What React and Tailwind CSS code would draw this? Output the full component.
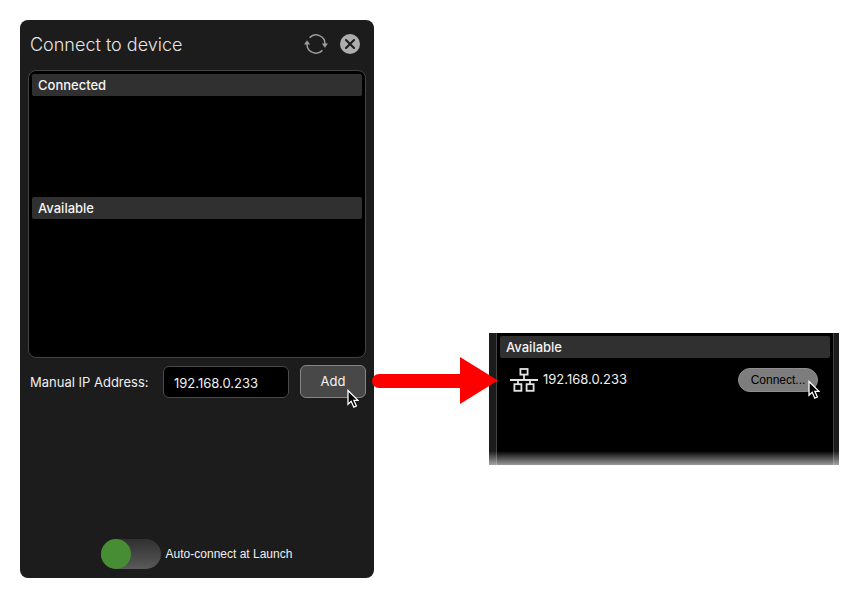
import React from "react";

function Cursor({ className }) {
  return (
    <svg className={`pointer-events-none absolute h-5 w-3 ${className}`} viewBox="0 0 12 20" aria-hidden="true">
      <path
        d="M1 1.5V15.2L4.2 12.3L6.8 18.2L9.4 17L6.9 11.4H11Z"
        fill="#000"
        stroke="#fff"
        strokeWidth="1.3"
        strokeLinejoin="miter"
      />
    </svg>
  );
}

function RefreshIcon() {
  return (
    <svg className="h-6 w-6" viewBox="0 0 24 24" fill="none" aria-hidden="true">
      <path d="M5.6 5.6A9 9 0 0 1 21 12" stroke="#9c9c9c" strokeWidth="1.5" />
      <path d="M18.4 18.4A9 9 0 0 1 3 12" stroke="#9c9c9c" strokeWidth="1.5" />
      <path d="M17.8 11.4H24L20.9 15.8Z" fill="#9c9c9c" />
      <path d="M0 12.6H6.2L3.1 8.2Z" fill="#9c9c9c" />
    </svg>
  );
}

function CloseIcon() {
  return (
    <svg className="h-5 w-5" viewBox="0 0 20 20" aria-hidden="true">
      <circle cx="10" cy="10" r="10" fill="#adadad" />
      <path d="M6 6L14 14M14 6L6 14" stroke="#1c1c1c" strokeWidth="2.1" strokeLinecap="round" />
    </svg>
  );
}

function NetworkIcon() {
  return (
    <svg className="h-6 w-7" viewBox="0 0 28 24" fill="none" stroke="#e4e4e4" strokeWidth="1.8" aria-hidden="true">
      <rect x="10.4" y="1" width="7.2" height="5.6" />
      <path d="M14 7V12M0 12H28M8 12V16M20 12V16" />
      <rect x="4.4" y="16.2" width="7" height="6.6" />
      <rect x="16.6" y="16.2" width="7" height="6.6" />
    </svg>
  );
}

function SectionTitle({ children }) {
  return (
    <h2 className="h-[22px] rounded-xs bg-[#303030] pl-1.5 text-[13px] leading-[23px] font-medium text-[#f4f4f4]">{children}</h2>
  );
}

function ConnectPanel() {
  return (
    <section className="flex w-[354px] shrink-0 flex-col rounded-[8px] bg-[#1c1c1c] px-2 pb-[9px] text-[#efefef]">
      <header className="flex h-[50px] items-center pr-1.5 pb-0.5 pl-0.5">
        <h1 className="flex-1 text-[18px] font-light text-[#e6e6e6]">Connect to device</h1>
        <div className="flex items-center gap-3">
          <button type="button" aria-label="Refresh">
            <RefreshIcon />
          </button>
          <button type="button" aria-label="Close">
            <CloseIcon />
          </button>
        </div>
      </header>
      <div className="rounded-[8px] border border-[#444] bg-black p-[3px]">
        <SectionTitle>Connected</SectionTitle>
        <div className="h-[101px]" />
        <SectionTitle>Available</SectionTitle>
        <div className="h-[135px]" />
      </div>
      <form className="flex items-center pt-[7px] pl-0.5 text-[13px]" onSubmit={(e) => e.preventDefault()}>
        <label htmlFor="ip" className="flex-1 pt-0.5">
          Manual IP Address:
        </label>
        <input
          id="ip"
          defaultValue="192.168.0.233"
          className="mr-[11px] h-8 w-[126px] rounded-[6px] border border-[#4a4a4a] bg-black px-2.5 pt-0.5 text-[#efefef]"
        />
        <div className="relative">
          <button type="submit" className="block h-[33px] w-[66px] rounded-[6px] border border-[#858585] bg-[#484848] text-[#f4f4f4]">
            Add
          </button>
          <Cursor className="top-6 left-[47px]" />
        </div>
      </form>
      <label className="mt-[141px] flex items-center justify-center gap-[5px] pr-px font-['Liberation_Sans',sans-serif] text-[12px]">
        <span className="relative flex h-[30px] w-[60px] rounded-full bg-linear-to-b from-[#303030] to-[#5a5a5a]">
          <input type="checkbox" className="peer absolute inset-0 h-full w-full cursor-pointer appearance-none" />
          <span className="pointer-events-none h-[30px] w-[30px] rounded-full bg-[#478d33] peer-checked:ml-auto" />
        </span>
        <span>Auto-connect at Launch</span>
      </label>
    </section>
  );
}

function AvailablePanel() {
  return (
    <section className="relative mt-[313px] h-[132px] w-[350px] shrink-0 bg-[#1c1c1c] pr-[5px] pl-[7px] text-[#efefef]">
      <div className="h-full border-x border-[#444] bg-black px-[3px] pt-[3px]">
        <SectionTitle>Available</SectionTitle>
        <div className="flex h-11 items-center gap-[5px] pr-3 pl-2.5 text-[13px]">
          <NetworkIcon />
          <span className="flex-1">192.168.0.233</span>
          <div className="relative">
            <button
              type="button"
              className="block h-6 w-20 rounded-full border border-[#8f8f8f] bg-[#7d7d7d] font-['Liberation_Sans',sans-serif] text-[12px] text-black"
            >
              Connect...
            </button>
            <Cursor className="top-3 left-[70px]" />
          </div>
        </div>
      </div>
      <div className="absolute inset-x-0 bottom-0 h-3.5 bg-linear-to-b from-transparent to-white/60" />
    </section>
  );
}

export default function App() {
  return (
    <main className="flex min-h-screen items-start bg-white p-5 font-['Inter',Arial,sans-serif]">
      <ConnectPanel />
      <div className="relative mt-[337px] h-[47px] min-w-[60px] flex-1">
        <div className="absolute inset-y-0 -right-[9px] -left-[2px] z-10 flex items-center">
          <div className="h-3.5 flex-1 rounded-l-full bg-[#ff0000]" />
          <svg className="h-[47px] w-[38px]" viewBox="0 0 38 47" aria-hidden="true">
            <path d="M0 0L38 23.5L0 47Z" fill="#ff0000" />
          </svg>
        </div>
      </div>
      <AvailablePanel />
    </main>
  );
}
